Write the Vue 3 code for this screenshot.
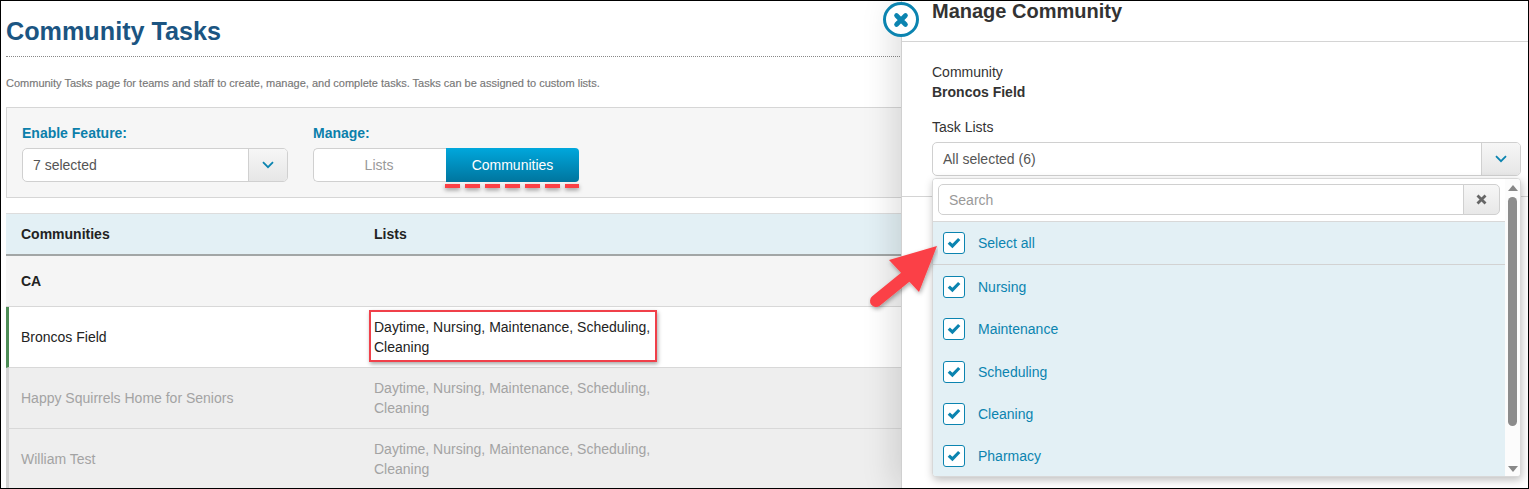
<template>
  <main class="app">
    <section class="page">
      <h1>Community Tasks</h1>
      <p class="intro">Community Tasks page for teams and staff to create, manage, and complete tasks. Tasks can be assigned to custom lists.</p>

      <div class="filters">
        <div class="field">
          <label>Enable Feature:</label>
          <div class="select">
            <span>7 selected</span>
            <span class="caret"><svg width="12" height="8" viewBox="0 0 12 8"><path d="M1 1.2l5 5 5-5" fill="none" stroke="#0b84b0" stroke-width="1.8" /></svg></span>
          </div>
        </div>
        <div class="field">
          <label>Manage:</label>
          <div class="toggle">
            <button>Lists</button>
            <button class="on">Communities</button>
            <div class="dashes"></div>
          </div>
        </div>
      </div>

      <div class="table">
        <div class="row head">
          <div>Communities</div>
          <div>Lists</div>
        </div>
        <div class="row group"><div>CA</div></div>
        <div v-for="c in communities" :key="c.name" class="row item" :class="{ off: !c.active }">
          <div>{{ c.name }}</div>
          <div class="lists">
            Daytime, Nursing, Maintenance, Scheduling,<br>Cleaning
            <div v-if="c.active" class="callout"></div>
          </div>
        </div>
      </div>
    </section>

    <aside class="drawer">
      <button class="close">
        <svg width="18" height="18" viewBox="0 0 18 18"><path d="M4.5 4.5l9 9M13.5 4.5l-9 9" stroke="#0b84b0" stroke-width="4.6" stroke-linecap="round" /></svg>
      </button>
      <h2>Manage Community</h2>
      <div class="body">
        <div class="lbl">Community</div>
        <div class="name">Broncos Field</div>
        <div class="lbl task">Task Lists</div>
        <div class="select">
          <span>All selected (6)</span>
          <span class="caret"><svg width="12" height="8" viewBox="0 0 12 8"><path d="M1 1.2l5 5 5-5" fill="none" stroke="#0b84b0" stroke-width="1.8" /></svg></span>
        </div>
      </div>
      <div class="rule"></div>

      <div class="dropdown">
        <div class="options">
          <div class="search">
            <div class="search-input">Search</div>
            <span class="clear"><svg width="11" height="11" viewBox="0 0 11 11"><path d="M1.5 1.5l8 8M9.5 1.5l-8 8" stroke="#666" stroke-width="2.8" /></svg></span>
          </div>
          <div class="opt all">
            <span class="box"><svg width="14" height="12" viewBox="0 0 14 12"><path d="M1.8 5.6l3.6 3.4 6.8-7" fill="none" stroke="#0b84b0" stroke-width="3.2" /></svg></span>
            Select all
          </div>
          <div v-for="o in options" :key="o" class="opt">
            <span class="box"><svg width="14" height="12" viewBox="0 0 14 12"><path d="M1.8 5.6l3.6 3.4 6.8-7" fill="none" stroke="#0b84b0" stroke-width="3.2" /></svg></span>
            {{ o }}
          </div>
        </div>
        <div class="scrollbar">
          <i class="up"></i>
          <i class="thumb"></i>
          <i class="down"></i>
        </div>
      </div>
    </aside>

    <svg class="arrow" width="70" height="70" viewBox="0 0 70 70">
      <defs>
        <filter id="sh" x="-20%" y="-20%" width="150%" height="150%">
          <feDropShadow dx="1" dy="2" stdDeviation="2" flood-color="#000" flood-opacity="0.35" />
        </filter>
      </defs>
      <g filter="url(#sh)">
        <path d="M8 58L40 32" stroke="#fb4146" stroke-width="12" stroke-linecap="round" />
        <path d="M69 3L21 17l30 32z" fill="#fb4146" />
      </g>
    </svg>
  </main>
</template>

<script setup>
const communities = [
  { name: 'Broncos Field', active: true },
  { name: 'Happy Squirrels Home for Seniors', active: false },
  { name: 'William Test', active: false }
]

const options = ['Nursing', 'Maintenance', 'Scheduling', 'Cleaning', 'Pharmacy']
</script>

<style>
html, body {
  margin: 0;
  background: #fff;
}
</style>

<style scoped>
.app {
  width: 1529px;
  height: 489px;
  box-sizing: border-box;
  border: 1px solid #000;
  position: relative;
  overflow: hidden;
  background: #fff;
  font-family: "Liberation Sans", Arial, sans-serif;
  font-size: 14px;
  color: #333;
}

.page {
  padding-left: 5px;
}

h1 {
  margin: 0;
  height: 56px;
  box-sizing: border-box;
  padding-top: 14px;
  font-size: 25.2px;
  line-height: 32px;
  color: #1b5582;
  border-bottom: 1px dotted #888;
}

.intro {
  margin: 0;
  padding-top: 19px;
  height: 50px;
  box-sizing: border-box;
  font-size: 11px;
  line-height: 14px;
  color: #777;
  -webkit-text-stroke: 0.15px #777;
}

.filters {
  height: 91px;
  box-sizing: border-box;
  border: 1px solid #d6d6d6;
  background: #f6f6f6;
  padding: 17px 15px 0;
  display: flex;
  gap: 25px;
}

.field {
  width: 266px;
}

.field label {
  display: block;
  height: 23px;
  line-height: 16px;
  font-weight: bold;
  color: #0b7fab;
}

.select {
  height: 34px;
  box-sizing: border-box;
  border: 1px solid #d0d0d0;
  border-radius: 5px;
  background: #fff;
  display: flex;
  align-items: center;
  justify-content: space-between;
  padding-left: 10px;
  color: #555;
}

.caret {
  width: 38px;
  height: 100%;
  display: flex;
  align-items: center;
  justify-content: center;
  border-left: 1px solid #d0d0d0;
  background: linear-gradient(#f6f6f6, #e6e6e6);
  border-radius: 0 4px 4px 0;
}

.toggle {
  display: flex;
  height: 34px;
  position: relative;
}

.toggle button {
  width: 133px;
  border: 1px solid #d0d0d0;
  border-right: none;
  border-radius: 5px 0 0 5px;
  background: #fff;
  color: #999;
  font: inherit;
  padding: 0 2px 0 0;
}

.toggle .on {
  border: none;
  border-radius: 0 4px 4px 0;
  background: linear-gradient(#00a7dc, #00759e);
  color: #fff;
  padding: 0;
}

.dashes {
  position: absolute;
  left: 132px;
  top: 36px;
  width: 134px;
  height: 4px;
  background: repeating-linear-gradient(90deg, #fb4146 0 15px, transparent 15px 20px);
  filter: drop-shadow(0 2px 2px rgba(0, 0, 0, 0.4));
}

.table {
  margin-top: 15px;
  border-top: 1px solid #ddd;
}

.row {
  display: flex;
  align-items: center;
  border-bottom: 1px solid #d8d8d8;
  padding-left: 15px;
}

.row > div:first-child {
  width: 353px;
  flex: none;
}

.head {
  height: 42px;
  box-sizing: border-box;
  padding-bottom: 1px;
  background: #e3f0f5;
  border-bottom: 2px solid #a2a6a6;
  font-weight: bold;
  color: #222;
}

.group {
  height: 51px;
  box-sizing: border-box;
  background: #f5f5f5;
  font-weight: bold;
  color: #222;
}

.item {
  height: 61px;
  box-sizing: border-box;
  padding-left: 12px;
  border-left: 3px solid #4c8c55;
  background: #fff;
  color: #222;
}

.item.off {
  border-left-color: #d2d2d2;
  background: #eee;
  color: #a3a3a3;
}

.lists {
  line-height: 20px;
  position: relative;
}

.callout {
  position: absolute;
  left: -5px;
  top: -7px;
  width: 288px;
  height: 52px;
  box-sizing: border-box;
  border: 2px solid #f0404a;
  box-shadow: 1px 2px 4px rgba(0, 0, 0, 0.35);
}

.drawer {
  position: absolute;
  left: 900px;
  top: 0;
  right: 0;
  bottom: 0;
  background: #fff;
  border-left: 1px solid #d0d0d0;
  box-shadow: -8px 0 30px rgba(0, 0, 0, 0.13);
}

.close {
  position: absolute;
  left: -19px;
  top: 1px;
  width: 36px;
  height: 35px;
  padding: 0;
  box-sizing: border-box;
  border: 3.5px solid #0b84b0;
  border-radius: 50%;
  background: #fff;
  display: flex;
  align-items: center;
  justify-content: center;
}

h2 {
  margin: 0;
  height: 41px;
  box-sizing: border-box;
  padding-left: 30px;
  font-size: 20px;
  line-height: 21px;
  color: #333;
  border-bottom: 1px solid #d4d4d4;
}

.body {
  padding: 20px 7px 0 30px;
  line-height: 20px;
}

.name {
  font-weight: bold;
}

.task {
  margin-top: 15px;
  margin-bottom: 5px;
}

.rule {
  margin-top: 20px;
  border-top: 1px solid #d4d4d4;
}

.dropdown {
  position: absolute;
  left: 30px;
  top: 177px;
  width: 589px;
  height: 299px;
  box-sizing: border-box;
  border: 1px solid #d8d8d8;
  border-radius: 4px;
  background: #fff;
  box-shadow: 1px 3px 8px rgba(0, 0, 0, 0.25);
  display: flex;
  overflow: hidden;
}

.options {
  flex: 1;
  background: #e3f0f5;
}

.search {
  display: flex;
  height: 43px;
  box-sizing: border-box;
  padding: 5px 5px 6px 5px;
  background: #fff;
  border-bottom: 1px solid #d8d8d8;
}

.search-input {
  flex: 1;
  border: 1px solid #d0d0d0;
  border-radius: 5px 0 0 5px;
  color: #999;
  padding-left: 10px;
  line-height: 30px;
}

.clear {
  width: 35px;
  display: flex;
  align-items: center;
  justify-content: center;
  border: 1px solid #d0d0d0;
  border-left: 1px solid #d0d0d0;
  border-radius: 0 5px 5px 0;
  background: linear-gradient(#f6f6f6, #e8e8e8);
  margin-left: -1px;
}

.opt {
  height: 42.25px;
  box-sizing: border-box;
  display: flex;
  align-items: center;
  gap: 13px;
  padding-left: 10px;
  color: #0b84b0;
}

.all {
  height: 43px;
  margin-bottom: 1px;
  border-bottom: 1px solid #d2d2d2;
}

.box {
  width: 22px;
  height: 22px;
  box-sizing: border-box;
  border: 1px solid #0b84b0;
  border-radius: 3px;
  background: #fff;
  display: flex;
  align-items: center;
  justify-content: center;
}

.scrollbar {
  width: 15px;
  flex: none;
  display: flex;
  flex-direction: column;
  align-items: center;
  background: #fcfcfc;
  padding: 6px 0 4px;
}

.up {
  width: 0;
  height: 0;
  border: 5px solid transparent;
  border-top: none;
  border-bottom: 6px solid #888;
}

.thumb {
  width: 9px;
  flex: 1;
  margin: 6px 0 40px;
  border-radius: 5px;
  background: #8c8c8c;
}

.down {
  width: 0;
  height: 0;
  border: 5px solid transparent;
  border-bottom: none;
  border-top: 6px solid #888;
}

.arrow {
  position: absolute;
  left: 867px;
  top: 242px;
}
</style>
